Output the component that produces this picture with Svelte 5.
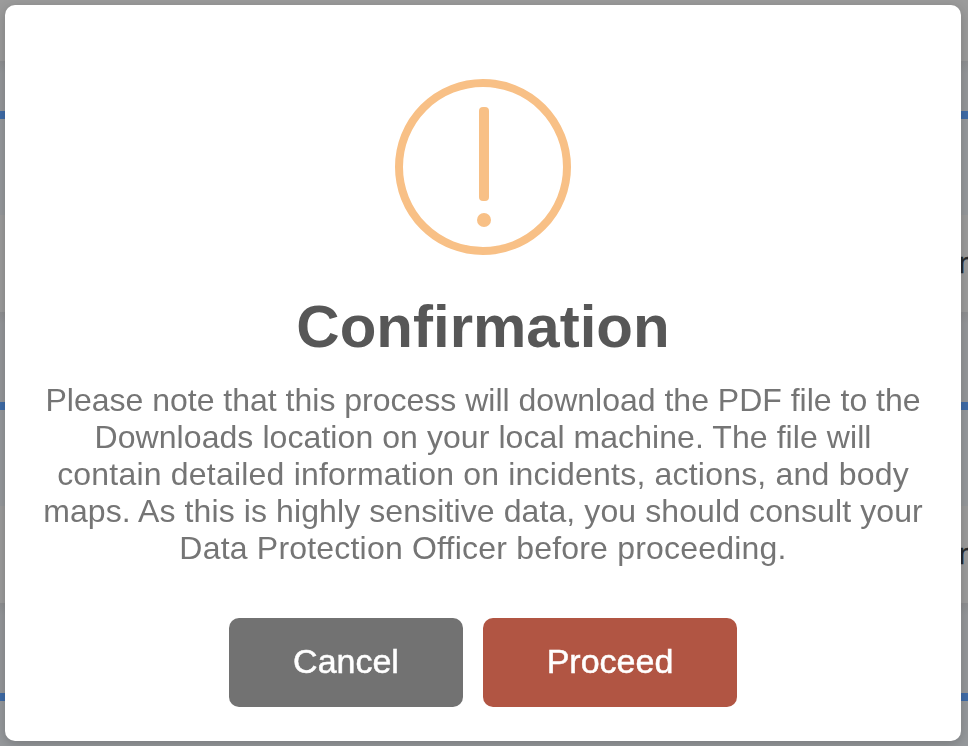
<script>
  const sections = [
    { header: 50, body: 96, row: 97, text: "n" },
    { header: 90, body: 96, row: 97, text: "n" },
    { header: 90, body: 45, row: 0, text: "" },
  ];

  const message = [
    { line: "Please note that this process will download the PDF file to the", spacing: 0 },
    { line: "Downloads location on your local machine. The file will", spacing: 0.07 },
    { line: "contain detailed information on incidents, actions, and body", spacing: 0.2 },
    { line: "maps. As this is highly sensitive data, you should consult your", spacing: 0.1 },
    { line: "Data Protection Officer before proceeding.", spacing: 0.2 },
  ];

  let open = true;

  function close() {
    open = false;
  }
</script>

<div class="page">
  <div class="topbar"></div>
  {#each sections as { header, body, row, text }}
    <div class="header" style="height: {header}px;"></div>
    <div class="rule"></div>
    <div class="body" style="height: {body}px;"></div>
    <div class="row" style="height: {row}px;">{text}</div>
  {/each}
</div>

{#if open}
  <div class="overlay">
    <div class="modal" role="dialog" aria-modal="true" aria-labelledby="title">
      <svg class="icon" viewBox="0 0 176 176" aria-hidden="true">
        <circle cx="88" cy="88" r="84" fill="none" stroke="#f8c086" stroke-width="8" />
        <rect x="84" y="28" width="10" height="94" rx="4" fill="#f8c086" />
        <circle cx="89" cy="141" r="7" fill="#f8c086" />
      </svg>
      <h2 id="title">Confirmation</h2>
      <p>
        {#each message as { line, spacing }}
          <span style="letter-spacing: {spacing}px;">{line}</span>
        {/each}
      </p>
      <div class="buttons">
        <button class="cancel" on:click={close}>Cancel</button>
        <button class="proceed" on:click={close}>Proceed</button>
      </div>
    </div>
  </div>
{/if}

<style>
  :global(body) {
    margin: 0;
    overflow: hidden;
  }

  .page {
    height: 746px;
    overflow: hidden;
    background: #999;
    font-family: "Liberation Sans", Arial, sans-serif;
  }

  .topbar {
    height: 61px;
    background: #9b9b9b;
  }

  .header {
    background: linear-gradient(#8f9092, #95979a 12px);
  }

  .rule {
    height: 8px;
    background: #3f6ca8;
  }

  .body {
    background: #96999c;
  }

  .row {
    display: flex;
    align-items: center;
    justify-content: flex-end;
    box-sizing: border-box;
    overflow: hidden;
    padding-bottom: 1px;
    background: #9c9c9c;
    color: #242629;
    font-size: 30px;
    -webkit-text-stroke: 0.5px #242629;
    margin-right: -7px;
  }

  .overlay {
    position: fixed;
    inset: 0;
    box-sizing: border-box;
    padding: 5px 7px 5px 5px;
  }

  .modal {
    box-sizing: border-box;
    height: 736px;
    padding-top: 74px;
    display: flex;
    flex-direction: column;
    align-items: center;
    border-radius: 10px;
    background: #fff;
    box-shadow: 0 3px 12px rgba(0, 0, 0, 0.2);
    font-family: "Liberation Sans", Arial, sans-serif;
  }

  .icon {
    width: 176px;
    height: 176px;
  }

  h2 {
    margin: 37px 0 0;
    font-size: 60px;
    line-height: 70px;
    font-weight: 700;
    font-variant-ligatures: none;
    color: #575757;
  }

  p {
    margin: 20px 0 0;
    display: flex;
    flex-direction: column;
    align-items: center;
    font-size: 32px;
    line-height: 37px;
    font-variant-ligatures: none;
    white-space: nowrap;
    color: #757575;
  }

  .buttons {
    display: flex;
    gap: 20px;
    margin-top: 51px;
  }

  button {
    height: 89px;
    padding: 0 0 2px;
    border: 0;
    border-radius: 10px;
    font-family: inherit;
    font-size: 34px;
    color: #fff;
    -webkit-text-stroke: 0.5px #fff;
    cursor: pointer;
  }

  .cancel {
    width: 234px;
    background: #727272;
  }

  .proceed {
    width: 254px;
    background: #b15543;
  }
</style>
